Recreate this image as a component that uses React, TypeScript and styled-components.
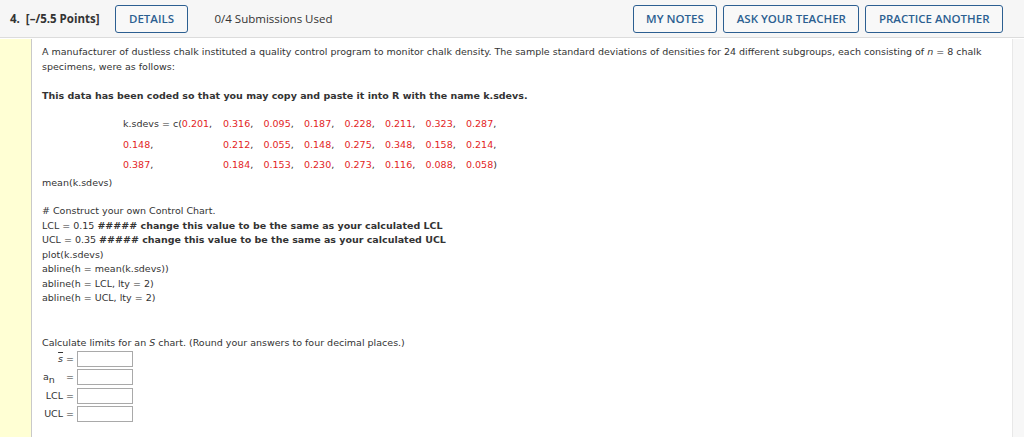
import styled, { createGlobalStyle } from "styled-components";

const GlobalStyle = createGlobalStyle`
  html, body {
    margin: 0;
    padding: 0;
    background: #ffffff;
  }
`;

const headerFont = `"Open Sans", "Noto Sans", Arial, sans-serif`;
const bodyFont = `"DejaVu Sans", Verdana, sans-serif`;

const numbers = [
  ["0.316", "0.095", "0.187", "0.228", "0.211", "0.323", "0.287"],
  ["0.212", "0.055", "0.148", "0.275", "0.348", "0.158", "0.214"],
  ["0.184", "0.153", "0.230", "0.273", "0.116", "0.088", "0.058"],
];

function App() {
  return (
    <Page>
      <GlobalStyle />
      <Header>
        <Points>4.&nbsp; [–/5.5 Points]</Points>
        <OutlineButton>DETAILS</OutlineButton>
        <Submissions>0/4 Submissions Used</Submissions>
        <Spacer />
        <ButtonGroup>
          <OutlineButton>MY NOTES</OutlineButton>
          <OutlineButton>ASK YOUR TEACHER</OutlineButton>
          <OutlineButton>PRACTICE ANOTHER</OutlineButton>
        </ButtonGroup>
      </Header>
      <Body>
        <Gutter />
        <Content>
          <Paragraph>
            A manufacturer of dustless chalk instituted a quality control
            program to monitor chalk density. The sample standard deviations of
            densities for 24 different subgroups, each consisting of <i>n</i> =
            8 chalk specimens, were as follows:
          </Paragraph>
          <BoldNote>
            This data has been coded so that you may copy and paste it into R
            with the name k.sdevs.
          </BoldNote>
          <DataTable>
            <tbody>
              {numbers.map((row, r) => (
                <tr key={r}>
                  <FirstCell>
                    {r === 0 ? (
                      <>
                        k.sdevs = c(<Red>0.201</Red>,
                      </>
                    ) : (
                      <>
                        <Red>{r === 1 ? "0.148" : "0.387"}</Red>,
                      </>
                    )}
                  </FirstCell>
                  {row.map((n, i) => (
                    <NumCell key={i}>
                      <Red>{n}</Red>
                      {r === 2 && i === row.length - 1 ? ")" : ","}
                    </NumCell>
                  ))}
                </tr>
              ))}
            </tbody>
          </DataTable>
          <CodeLine>mean(k.sdevs)</CodeLine>
          <CodeBlock>
            <CodeLine># Construct your own Control Chart.</CodeLine>
            <CodeLine>
              LCL = 0.15 <b>##### change this value to be the same as your calculated LCL</b>
            </CodeLine>
            <CodeLine>
              UCL = 0.35 <b>##### change this value to be the same as your calculated UCL</b>
            </CodeLine>
            <CodeLine>plot(k.sdevs)</CodeLine>
            <CodeLine>abline(h = mean(k.sdevs))</CodeLine>
            <CodeLine>abline(h = LCL, lty = 2)</CodeLine>
            <CodeLine>abline(h = UCL, lty = 2)</CodeLine>
          </CodeBlock>
          <Prompt>
            Calculate limits for an <i>S</i> chart. (Round your answers to four
            decimal places.)
          </Prompt>
          <AnswerGrid>
            <AnswerLabel>
              <SBar>s</SBar> =
            </AnswerLabel>
            <AnswerInput />
            <AnswerLabel $spread>
              <span>
                a<Sub>n</Sub>
              </span>
              <span>=</span>
            </AnswerLabel>
            <AnswerInput />
            <AnswerLabel>LCL =</AnswerLabel>
            <AnswerInput />
            <AnswerLabel>UCL =</AnswerLabel>
            <AnswerInput />
          </AnswerGrid>
        </Content>
        <RightEdge />
      </Body>
    </Page>
  );
}

export default App;

const Page = styled.div`
  width: 1024px;
  height: 437px;
  overflow: hidden;
  display: flex;
  flex-direction: column;
  background: #ffffff;
`;

const Header = styled.div`
  height: 38px;
  flex-shrink: 0;
  box-sizing: border-box;
  display: flex;
  align-items: center;
  padding: 0 21px 0 10px;
  background: #f6f6f6;
  border-bottom: 1px solid #dcdcdc;
  font-family: ${headerFont};
  font-size: 11.5px;
  color: #333333;
`;

const Points = styled.span`
  font-weight: 700;
  margin-right: 16px;
  white-space: nowrap;
`;

const Submissions = styled.span`
  margin-left: 27px;
  white-space: nowrap;
`;

const Spacer = styled.div`
  flex: 1;
`;

const ButtonGroup = styled.div`
  display: flex;
  gap: 6px;
`;

const OutlineButton = styled.button`
  height: 28px;
  box-sizing: border-box;
  padding: 0 12.5px;
  background: #f8f8f8;
  border: 1.5px solid #2c5f91;
  border-radius: 3px;
  color: #2c5f91;
  font-family: ${headerFont};
  font-size: 11.5px;
  font-weight: 600;
  white-space: nowrap;
  cursor: pointer;
`;

const Body = styled.div`
  flex: 1;
  display: flex;
  margin-top: 1px;
`;

const Gutter = styled.div`
  width: 31px;
  flex-shrink: 0;
  background: #ffffd4;
  border-right: 1px solid #c9c9c9;
`;

const Content = styled.div`
  flex: 1;
  padding: 5px 20px 0 10px;
  font-family: ${bodyFont};
  font-size: 9.5px;
  line-height: 15px;
  color: #333333;
`;

const RightEdge = styled.div`
  width: 11px;
  flex-shrink: 0;
  background: #f7f7f7;
  border-left: 1px solid #e8e8e8;
`;

const Paragraph = styled.p`
  margin: 0 0 14px;
`;

const BoldNote = styled.p`
  margin: 0 0 11px;
  font-weight: 700;
`;

const DataTable = styled.table`
  border-collapse: collapse;
  margin-left: 81px;
  line-height: 20.5px;
`;

const FirstCell = styled.td`
  width: 100px;
  padding: 0;
  white-space: nowrap;
  vertical-align: middle;
`;

const NumCell = styled.td`
  width: 40.5px;
  padding: 0;
  white-space: nowrap;
`;

const Red = styled.span`
  color: #e31e1e;
`;

const CodeBlock = styled.div`
  margin-top: 14px;
`;

const CodeLine = styled.div`
  line-height: 14.5px;
  white-space: nowrap;

  b {
    font-weight: 700;
  }
`;

const Prompt = styled.p`
  margin: 29px 0 1px;
`;

const AnswerGrid = styled.div`
  display: grid;
  grid-template-columns: 34px 56px;
  row-gap: 2.5px;
  margin-left: 1px;
  align-items: center;
`;

const AnswerLabel = styled.div<{ $spread?: boolean }>`
  display: flex;
  justify-content: ${(p) => (p.$spread ? "space-between" : "flex-end")};
  align-items: center;
  padding-right: 3px;
  line-height: 16px;
`;

const SBar = styled.i`
  text-decoration: overline;
  margin-right: 3px;
`;

const Sub = styled.sub`
  font-size: 9.5px;
  vertical-align: -3px;
  line-height: 0;
`;

const AnswerInput = styled.input`
  width: 56px;
  height: 16px;
  box-sizing: border-box;
  border: 1px solid #a9a9a9;
  border-radius: 0;
  padding: 0;
  margin: 0;
  background: #ffffff;
`;
